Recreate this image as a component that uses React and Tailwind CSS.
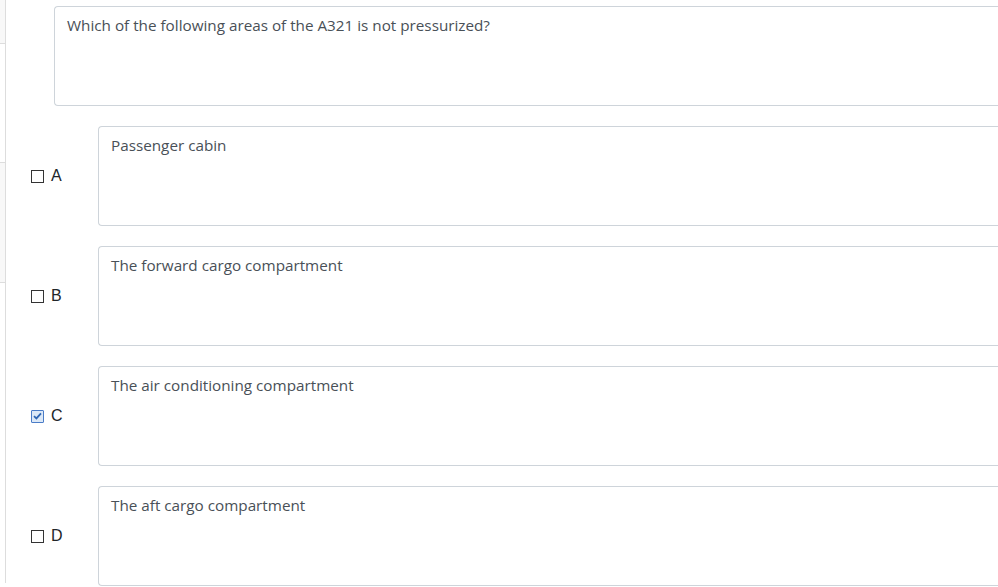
const OPTIONS = [
  { key: "A", text: "Passenger cabin", checked: false },
  { key: "B", text: "The forward cargo compartment", checked: false },
  { key: "C", text: "The air conditioning compartment", checked: true },
  { key: "D", text: "The aft cargo compartment", checked: false },
];

function CheckBox({ checked }) {
  if (checked) {
    return (
      <span className="flex h-[13px] w-[13px] items-center justify-center rounded-[1px] border border-[#4a7cc7] bg-[#dbe8f7]">
        <svg width="9" height="8" viewBox="0 0 9 8">
          <path d="M1 4.2 L3.4 6.4 L8 1.4" fill="none" stroke="#2f66b3" strokeWidth="1.8" />
        </svg>
      </span>
    );
  }
  return <span className="block h-[13px] w-[13px] border border-[#333] bg-white" />;
}

function Box({ children }) {
  return (
    <div className="h-[100px] flex-1 rounded-l-[4px] border border-r-0 border-[#ced4da] bg-white pl-[12px] pt-[7px] text-[15.25px] leading-[22px] text-[#495057]">
      {children}
    </div>
  );
}

export default function App() {
  return (
    <div
      className="flex min-h-[587px] bg-white"
      style={{ fontFamily: '"Open Sans", "Noto Sans", sans-serif' }}
    >
      <div className="flex h-[583px] w-[6px] flex-col border-r border-[#ddd]">
        <div className="h-[44px] border-b border-[#ddd] bg-[#f8f8f8]" />
        <div className="h-[119px] border-b border-[#ddd]" />
        <div className="h-[120px] border-b border-[#ddd] bg-[#f8f8f8]" />
      </div>
      <div className="flex flex-1 flex-col pt-[6px]">
        <div className="ml-[48px] flex">
          <Box>Which of the following areas of the A321 is not pressurized?</Box>
        </div>
        <div className="mt-[20px] flex flex-col gap-[20px]">
          {OPTIONS.map((o) => (
            <div key={o.key} className="flex items-center">
              <label className="flex w-[92px] items-center gap-[7px] pl-[25px] text-[16px] text-[#212529]">
                <CheckBox checked={o.checked} />
                <span style={{ fontFamily: '"Liberation Sans", Arial, sans-serif' }}>{o.key}</span>
              </label>
              <Box>{o.text}</Box>
            </div>
          ))}
        </div>
      </div>
    </div>
  );
}
